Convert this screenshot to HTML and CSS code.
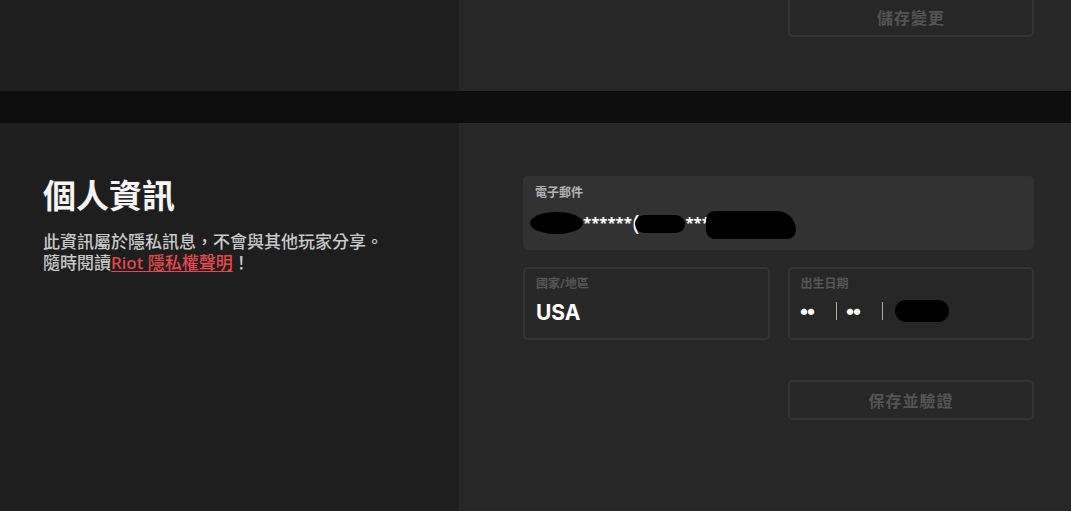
FILE: index.html
```html
<!DOCTYPE html>
<html lang="zh-Hant">
<head>
    <meta charset="UTF-8">
    <meta name="viewport" content="width=device-width, initial-scale=1.0">
    <title>個人資訊</title>
    <link rel="stylesheet" href="styles.css">
</head>
<body>
    <section class="panel panel-top">
        <div class="panel-side"></div>
        <div class="panel-main">
            <button class="btn-outline btn-top" disabled>儲存變更</button>
        </div>
    </section>

    <div class="divider"></div>

    <section class="panel panel-info">
        <div class="panel-side">
            <h1>個人資訊</h1>
            <p class="intro">
                此資訊屬於隱私訊息，不會與其他玩家分享。<br>
                隨時閱讀<a href="#" class="link">Riot 隱私權聲明</a>！
            </p>
        </div>

        <div class="panel-main">
            <div class="field field-filled">
                <label>電子郵件</label>
                <div class="value value-email">
                    <span class="blot blot-a"></span><span class="stars">******</span><span class="paren">(</span><span class="blot blot-b"></span><span class="stars">***</span><span class="blot blot-c"></span>
                </div>
            </div>

            <div class="field-row">
                <div class="field field-outline">
                    <label>國家/地區</label>
                    <div class="value value-big">USA</div>
                </div>
                <div class="field field-outline">
                    <label>出生日期</label>
                    <div class="value value-date">
                        <span class="dots">●●</span>
                        <span class="sep"></span>
                        <span class="dots">●●</span>
                        <span class="sep"></span>
                        <span class="blot blot-d"></span>
                    </div>
                </div>
            </div>

            <div class="actions">
                <button class="btn-outline" disabled>保存並驗證</button>
            </div>
        </div>
    </section>
</body>
</html>
```

FILE: styles.css
```css
:root {
    --side-bg: #1f1e1f;
    --main-bg: #282728;
    --divider: #0e0e0e;
    --field-bg: #333233;
    --field-border: #353435;
    --muted: #555455;
    --text: #f2f2f2;
    --soft: #c9c9c9;
    --red: #e5484d;
}

* {
    box-sizing: border-box;
    margin: 0;
    padding: 0;
}

body {
    font-family: "Noto Sans", "Noto Sans CJK TC", sans-serif;
    background: var(--main-bg);
    color: var(--text);
    overflow: hidden;
}

.panel {
    display: grid;
    grid-template-columns: 459px 1fr;
}

.panel-side {
    background: var(--side-bg);
}

.panel-main {
    background: var(--main-bg);
    padding: 0 37px 0 64px;
    display: flex;
    flex-direction: column;
}

.panel-top {
    height: 91px;
}

.panel-top .panel-main {
    align-items: flex-end;
}

.divider {
    height: 32px;
    background: var(--divider);
}

.panel-info {
    height: 388px;
}

.panel-info .panel-side {
    padding: 53px 0 0 43px;
}

.panel-info .panel-main {
    padding-top: 53px;
}

h1 {
    font-size: 33px;
    line-height: 40px;
    font-weight: 700;
    color: #f5f5f5;
    margin-bottom: 15px;
}

.intro {
    font-size: 17px;
    line-height: 21px;
    color: var(--soft);
    font-weight: 500;
}

.link {
    color: var(--red);
    text-decoration: underline;
    text-underline-offset: 2px;
}

.field {
    border-radius: 5px;
    padding: 9px 12px 0;
}

.field label {
    display: block;
    font-size: 12px;
    line-height: 16px;
    font-weight: 700;
}

.field-filled {
    background: var(--field-bg);
    height: 74px;
}

.field-filled label {
    color: #b3b3b3;
}

.field-outline {
    border: 2px solid var(--field-border);
    height: 73px;
    padding: 7px 11px 0;
}

.field-outline label {
    color: #575657;
}

.value {
    display: flex;
    align-items: center;
    font-weight: 700;
    color: #ffffff;
}

.value-email {
    margin: 6px 0 0 -5px;
    height: 30px;
    font-size: 15px;
}

.paren {
    font-weight: 400;
    font-size: 22px;
    margin: 0 -4px 0 1px;
}

.blot {
    display: inline-block;
    background: #000000;
    border-radius: 50%;
}

.blot-a {
    width: 53px;
    height: 22px;
    margin-top: 2px;
}

.blot-b {
    width: 50px;
    height: 18px;
    border-radius: 9px;
    margin-top: 4px;
}

.blot-c {
    width: 90px;
    height: 28px;
    border-radius: 14px 30px 14px 14px;
    margin-left: -4px;
    margin-top: 6px;
}

.field-row {
    display: grid;
    grid-template-columns: 1fr 1fr;
    gap: 18px;
    margin-top: 17px;
}

.value-big {
    font-size: 21px;
    line-height: 26px;
    margin-top: 8px;
    font-family: "Inter", "Noto Sans CJK TC", sans-serif;
}

.value-date {
    margin-top: 8px;
    height: 22px;
}

.dots {
    font-size: 7px;
    width: 35px;
}

.sep {
    width: 1px;
    height: 18px;
    background: #aaaaaa;
    margin-right: 10px;
}

.blot-d {
    width: 54px;
    height: 22px;
    border-radius: 11px;
    margin-left: 2px;
}

.actions {
    display: flex;
    justify-content: flex-end;
    margin-top: 40px;
}

.btn-outline {
    width: 246px;
    height: 40px;
    background: transparent;
    border: 2px solid var(--field-border);
    border-radius: 5px;
    color: var(--muted);
    font-family: "Noto Sans CJK TC", sans-serif;
    font-size: 16px;
    font-weight: 700;
    letter-spacing: 1px;
}

.btn-top {
    margin-top: -3px;
}
```
